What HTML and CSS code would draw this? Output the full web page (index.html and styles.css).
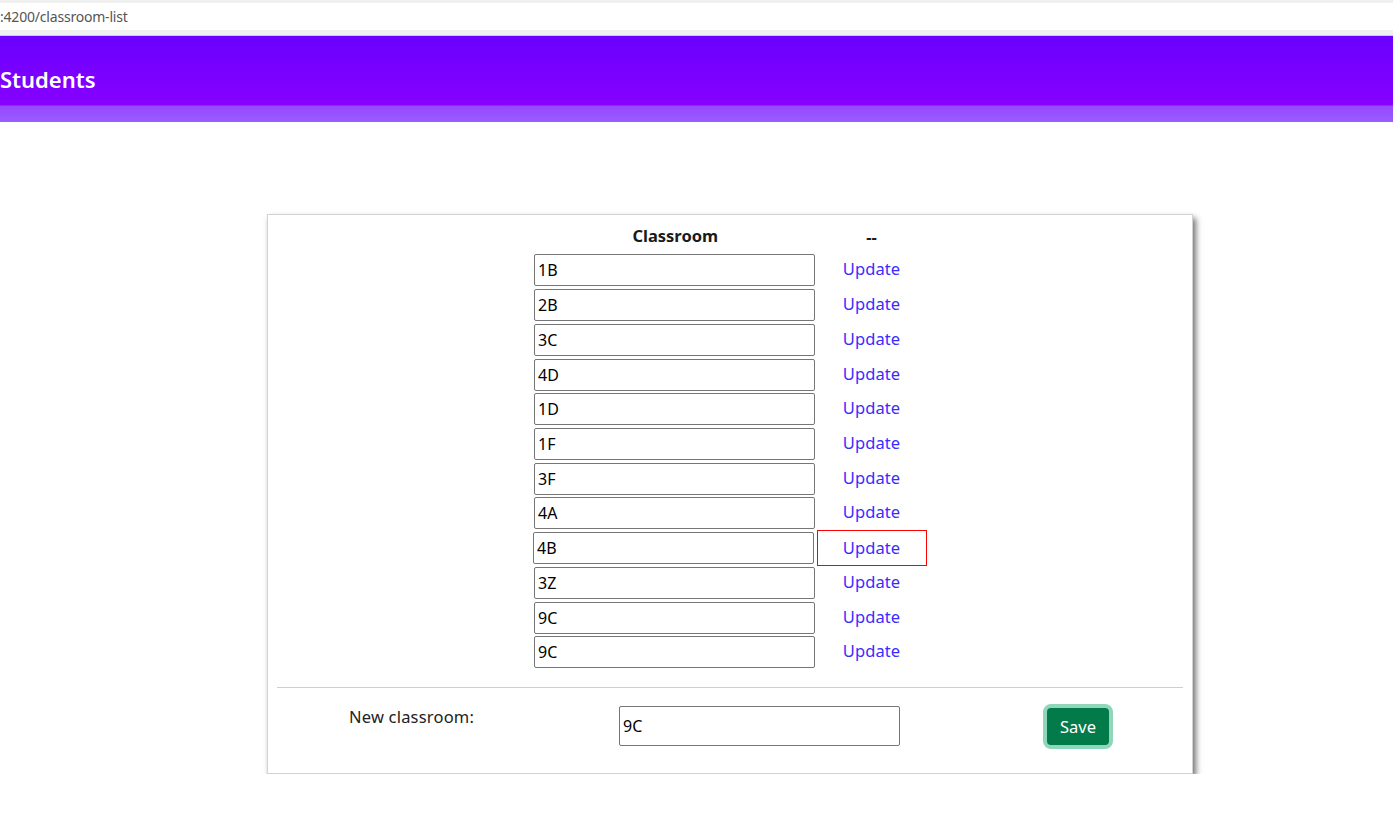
FILE: index.html
```html
<!DOCTYPE html>
<html>
<head>
<meta charset="utf-8">
<link rel="stylesheet" href="styles.css">
</head>
<body>
<div class="urlbar"><span class="url">:4200/classroom-list</span></div>
<header class="topbar"><h1 class="brand">Students</h1></header>
<main class="page">
  <section class="card">
    <div class="list">
      <div class="row head"><div class="c1 headtxt">Classroom</div><div class="c2 headdash">--</div></div>
      <div class="row"><div class="c1"><input class="field" value="1B"></div><div class="c2"><a class="link">Update</a></div></div>
      <div class="row"><div class="c1"><input class="field" value="2B"></div><div class="c2"><a class="link">Update</a></div></div>
      <div class="row"><div class="c1"><input class="field" value="3C"></div><div class="c2"><a class="link">Update</a></div></div>
      <div class="row"><div class="c1"><input class="field" value="4D"></div><div class="c2"><a class="link">Update</a></div></div>
      <div class="row"><div class="c1"><input class="field" value="1D"></div><div class="c2"><a class="link">Update</a></div></div>
      <div class="row"><div class="c1"><input class="field" value="1F"></div><div class="c2"><a class="link">Update</a></div></div>
      <div class="row"><div class="c1"><input class="field" value="3F"></div><div class="c2"><a class="link">Update</a></div></div>
      <div class="row"><div class="c1"><input class="field" value="4A"></div><div class="c2"><a class="link">Update</a></div></div>
      <div class="row"><div class="c1"><input class="field shifted" value="4B"></div><div class="c2 marked"><a class="link">Update</a></div></div>
      <div class="row"><div class="c1"><input class="field" value="3Z"></div><div class="c2"><a class="link">Update</a></div></div>
      <div class="row"><div class="c1"><input class="field" value="9C"></div><div class="c2"><a class="link">Update</a></div></div>
      <div class="row"><div class="c1"><input class="field" value="9C"></div><div class="c2"><a class="link">Update</a></div></div>
    </div>
    <hr class="sep">
    <div class="addrow">
      <label class="addlabel">New classroom:</label>
      <input class="addfield" value="9C">
      <button class="save">Save</button>
    </div>
  </section>
</main>
</body>
</html>
```
FILE: styles.css
```css
* { box-sizing: border-box; }
html, body { margin: 0; padding: 0; background: #fff; }
body { font-family: "Noto Sans", "Open Sans", sans-serif; color: #111; }

.urlbar {
  height: 36px;
  background: #f0f0f0;
  border-bottom: 1px solid #cfcfcf;
  padding-top: 3px;
}
.url {
  display: block;
  height: 27px;
  background: #fff;
  font-size: 14px;
  line-height: 27px;
  color: #555;
  letter-spacing: -0.2px;
}

.topbar {
  height: 86px;
  background: linear-gradient(to bottom, #6a00ff 0px, #8600ff 66px, #8d00ff 69px, #9549ff 70px, #9a5cff 86px);
  display: flex;
  align-items: center;
}
.brand {
  margin: 0;
  color: #fff;
  font-size: 22px;
  font-weight: 600;
  letter-spacing: 0;
}

.page {
  padding: 92px 0 0 267px;
}
.card {
  width: 926px;
  height: 560px;
  border: 1px solid #d2d2d2;
  box-shadow: 3px 4px 6px rgba(0,0,0,0.55);
  padding: 9px 9px 0 9px;
}

.list {
  display: flex;
  flex-direction: column;
  align-items: center;
}
.row {
  display: flex;
  height: 34.73px;
  align-items: center;
}
.row.head { height: 29px; font-weight: 700; font-size: 16.5px; color: #1a1a1a; }
.c1 { width: 283px; display: flex; justify-content: flex-start; padding-left: 0.5px; }
.c2 { width: 110px; text-align: center; height: 35px; display: flex; align-items: center; justify-content: center; padding-bottom: 3px; }
.head .c1, .head .c2 { height: 29px; }
.head .c1 { justify-content: center; }
.headtxt { padding-top: 0; }
.headdash { padding-bottom: 4px; }
.c2.marked { border: 1px solid #f00; height: 36px; padding-bottom: 2px; }
.field {
  width: 281px;
  height: 32px;
  border: 1px solid #767676;
  border-radius: 2px;
  font-family: "Noto Sans", sans-serif;
  font-size: 16px;
  color: #000;
  padding: 0 3px;
  margin: 0;
}
.field.shifted { position: relative; left: -1px; }
.link {
  color: #3b2bff;
  font-size: 16.5px;
  cursor: pointer;
  letter-spacing: 0.1px;
}

.sep {
  margin: 17px 0 0 0;
  border: 0;
  border-top: 1px solid #cfcfcf;
  height: 0;
}
.addrow {
  display: flex;
  align-items: flex-start;
  padding-left: 72px;
  padding-top: 16px;
}
.addlabel {
  width: 270px;
  font-size: 16.5px;
  color: #222;
  margin-top: 1px;
  letter-spacing: 0.2px;
}
.addfield {
  width: 281px;
  height: 40px;
  border: 1px solid #767676;
  border-radius: 2px;
  font-family: "Noto Sans", sans-serif;
  font-size: 16px;
  color: #000;
  padding: 0 3px;
  margin: 2px 0 0 0;
}
.save {
  margin-left: 143px;
  width: 70px;
  height: 45px;
  background: #037a4a;
  color: #fff;
  border: 4px solid #8fd6ba;
  border-radius: 8px;
  box-shadow: inset 0 0 0 1px #037a4a;
  font-family: "Noto Sans", sans-serif;
  font-size: 16.5px;
  padding: 0;
}
```
